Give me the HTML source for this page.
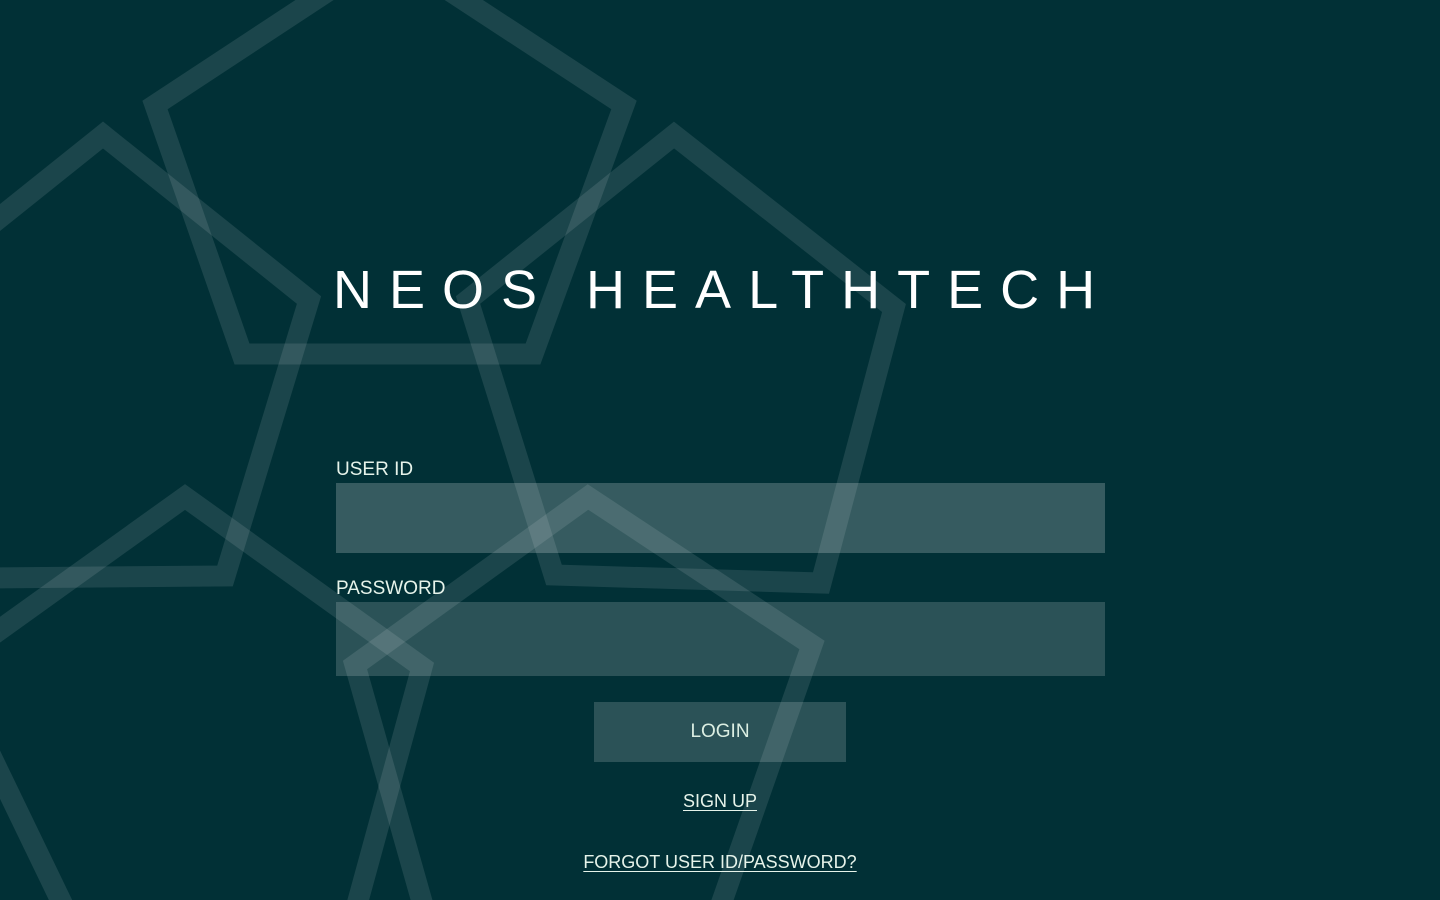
<!DOCTYPE html>
<html><head><meta charset="utf-8"><style>
html,body{margin:0;padding:0;}
body{width:1440px;height:900px;overflow:hidden;background:#013036;position:relative;font-family:"Liberation Sans",sans-serif;color:#e6f3ea;}
svg{position:absolute;left:0;top:0;}
.title{position:absolute;left:333px;top:258px;font-size:54px;letter-spacing:17px;color:#fff;white-space:nowrap;font-weight:normal;line-height:64px;}
.lbl{position:absolute;left:336px;font-size:19px;line-height:22px;}
.inp{position:absolute;left:336px;width:769px;}
.btn{position:absolute;left:594px;top:702px;width:252px;height:60px;background:rgba(255,255,255,0.17);text-align:center;line-height:60px;font-size:19px;color:#dbeee2;}
.lnk{position:absolute;left:0;width:1440px;text-align:center;font-size:18px;line-height:22px;}
.lnk span{text-decoration:underline;text-underline-offset:3px;}
</style></head><body>
<svg width="1440" height="900" viewBox="0 0 1440 900">
<g fill="none" stroke="rgba(255,255,255,0.105)" stroke-width="21" stroke-linejoin="miter">
<polygon points="389,-49 624,105 533,354 242,354 155,105"/>
<polygon points="103,135 309,300 225,576 -20,578 -103,300"/>
<polygon points="674,135 894,308 821,583 554,575 468,300"/>
<polygon points="185,497 422,667 350,930 75,930 -52,667"/>
<polygon points="588,497 812,645 712,930 430,930 355,665"/>
</g>
</svg>
<div class="title">NEOS HEALTHTECH</div>
<div class="lbl" style="top:459px">USER ID</div>
<div class="inp" style="top:483px;height:70px;background:rgba(255,255,255,0.21)"></div>
<div class="lbl" style="top:578px">PASSWORD</div>
<div class="inp" style="top:602px;height:74px;background:rgba(255,255,255,0.17)"></div>
<div class="btn">LOGIN</div>
<div class="lnk" style="top:790px"><span>SIGN UP</span></div>
<div class="lnk" style="top:851px"><span>FORGOT USER ID/PASSWORD?</span></div>
</body></html>
